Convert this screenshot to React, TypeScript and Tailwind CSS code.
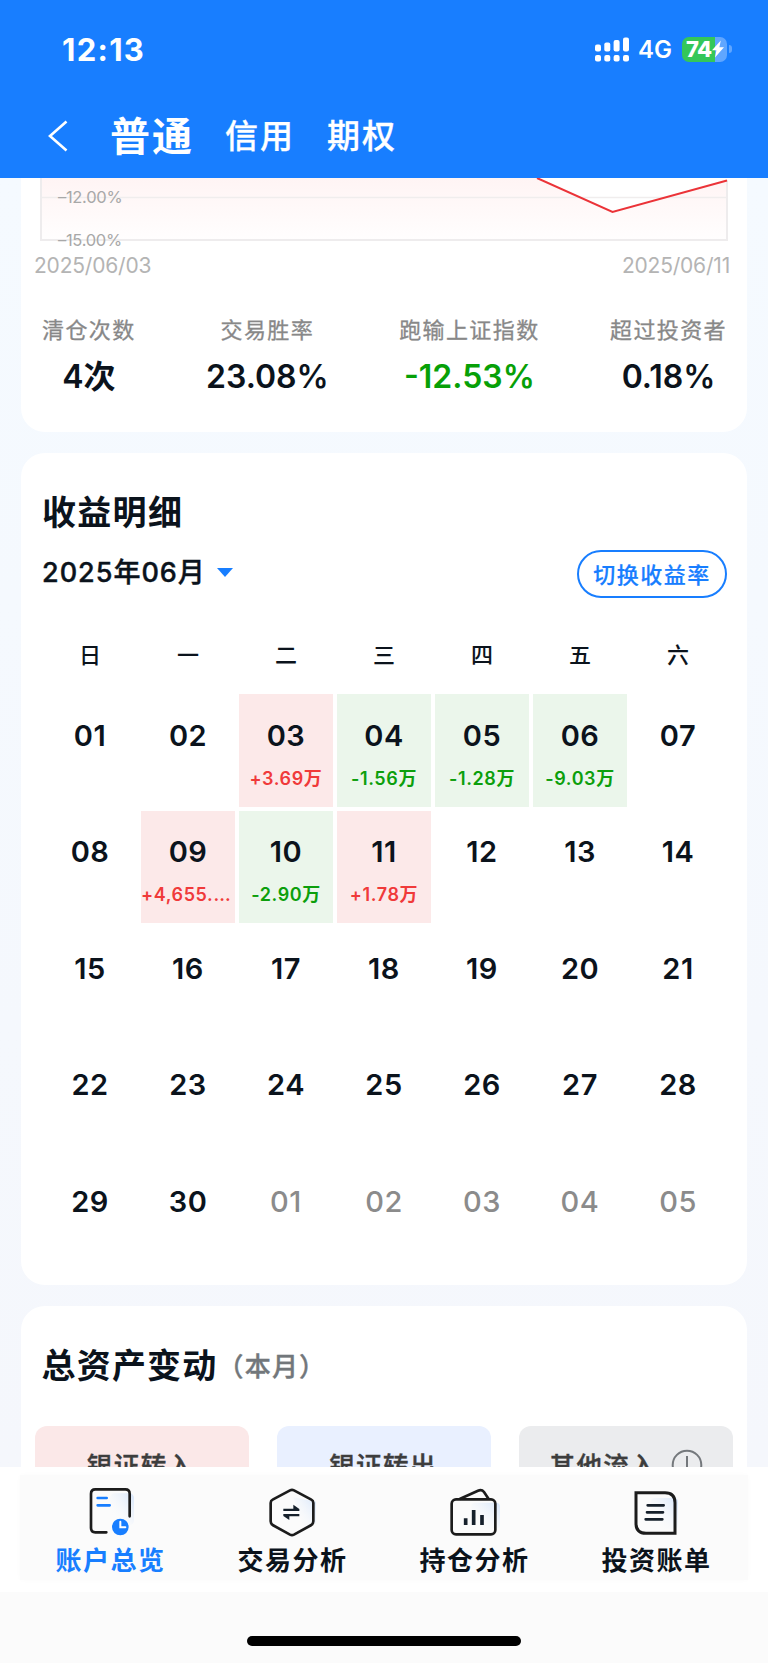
import React from 'react';

interface Stat {
    label: string;
    value: string;
    tone?: string;
}

interface Day {
    day: string;
    amount?: string;
    kind?: 'gain' | 'loss';
    muted?: boolean;
}

const stats: Stat[] = [
    { label: '清仓次数', value: '4次' },
    { label: '交易胜率', value: '23.08%' },
    { label: '跑输上证指数', value: '-12.53%', tone: 'text-[#07a007]' },
    { label: '超过投资者', value: '0.18%' },
];

const weekdays = ['日', '一', '二', '三', '四', '五', '六'];

const results: Record<string, Pick<Day, 'amount' | 'kind'>> = {
    '03': { amount: '+3.69万', kind: 'gain' },
    '04': { amount: '-1.56万', kind: 'loss' },
    '05': { amount: '-1.28万', kind: 'loss' },
    '06': { amount: '-9.03万', kind: 'loss' },
    '09': { amount: '+4,655.…', kind: 'gain' },
    '10': { amount: '-2.90万', kind: 'loss' },
    '11': { amount: '+1.78万', kind: 'gain' },
};

const days: Day[] = Array.from({ length: 35 }, (_, i) => {
    const muted = i >= 30;
    const day = String(muted ? i - 29 : i + 1).padStart(2, '0');
    return muted ? { day, muted } : { day, ...results[day] };
});

const kindStyles = {
    gain: 'bg-[#fce9e9] text-[#f03a3a]',
    loss: 'bg-[#ebf6eb] text-[#0c9f0c]',
};

const StatusBar = () => (
    <div className="flex h-[98px] items-center justify-between pl-[62px] pr-9 text-white">
        <span className="text-[31px] font-bold leading-none tracking-[1.3px]">12:13</span>
        <div className="flex items-center">
            <svg width="34" height="25" viewBox="0 0 34 25" fill="currentColor">
                <rect x="0" y="7.5" width="6" height="7" rx="2" />
                <rect x="9.3" y="5.5" width="6" height="9" rx="2" />
                <rect x="18.6" y="3" width="6" height="11.5" rx="2" />
                <rect x="28" y="0.5" width="6" height="14" rx="2" />
                <rect x="0" y="18" width="6" height="6.5" rx="2" />
                <rect x="9.3" y="18" width="6" height="6.5" rx="2" />
                <rect x="18.6" y="18" width="6" height="6.5" rx="2" />
                <rect x="28" y="18" width="6" height="6.5" rx="2" />
            </svg>
            <span className="ml-[9px] w-[44px] pt-0.5 text-[24px] font-semibold leading-none">4G</span>
            <div className="flex h-[25px] w-[45px] items-center overflow-hidden rounded-[7px] bg-gradient-to-r from-[#34c759] from-73% to-[#60a6ff] to-73% pl-1">
                <span className="text-[22px] font-extrabold leading-none tracking-[-0.6px]">74</span>
                <svg className="shrink-0" width="12" height="18" viewBox="0 0 12 17" fill="currentColor">
                    <path d="M8.8 0 0 9.8h4.4L3 17l9-10.2H7.4z" />
                </svg>
            </div>
            <div className="ml-0.5 h-2 w-[3px] rounded-r-full bg-[#60a6ff]" />
        </div>
    </div>
);

const Header = () => (
    <header className="h-[178px] shrink-0 bg-[#187eff]">
        <StatusBar />
        <div className="flex h-[76px] items-center pl-12 text-white">
            <svg width="20" height="32" viewBox="0 0 20 32" fill="none" stroke="currentColor" strokeWidth="2.6">
                <path d="M18.5 1.5 2 16l16.5 14.5" />
            </svg>
            <span className="ml-[42px] pt-0.5 text-[40px] font-bold leading-none tracking-[2px]">普通</span>
            <span className="ml-[31px] text-[33px] font-medium leading-none tracking-[2px] [-webkit-text-stroke:0.3px]">信用</span>
            <span className="ml-8 text-[33px] font-medium leading-none tracking-[2px] [-webkit-text-stroke:0.3px]">期权</span>
        </div>
    </header>
);

const ReturnChart = () => (
    <svg className="block overflow-visible" width="726" height="64" viewBox="21 178 726 64">
        <defs>
            <linearGradient id="area" x1="0" y1="178" x2="0" y2="240" gradientUnits="userSpaceOnUse">
                <stop offset="0" stopColor="#fff4f4" />
                <stop offset="1" stopColor="#fffefe" />
            </linearGradient>
        </defs>
        <path d="M41 178H537L612.5 212 727 180V240H41Z" fill="url(#area)" />
        <path d="M41 197.5H727" stroke="#f0eded" strokeWidth="1.3" />
        <path d="M41 178V240H727V180" fill="none" stroke="#eeeced" strokeWidth="2" />
        <path d="M537 178 612.5 212 727 180.5" fill="none" stroke="#eb3338" strokeWidth="2" />
        <g fill="#a8a8a8" fontSize="16.5" letterSpacing="-0.3">
            <text x="58" y="203">–12.00%</text>
            <text x="58" y="246">–15.00%</text>
        </g>
    </svg>
);

const SummaryCard = () => (
    <section className="h-[254px] shrink-0 rounded-b-[24px] bg-white">
        <ReturnChart />
        <div className="flex h-[46px] items-center justify-between pl-[13px] pr-[17px] text-[21px] leading-none tracking-[-0.2px] text-[#b4b4b4]">
            <span>2025/06/03</span>
            <span>2025/06/11</span>
        </div>
        <div className="flex justify-between pl-[21px] pr-[20px] pt-7">
            {stats.map((s) => (
                <div key={s.label} className="flex flex-col items-center">
                    <span className="text-[22px] leading-[28px] tracking-[1.4px] text-[#888] [-webkit-text-stroke:0.3px]">{s.label}</span>
                    <span className={`mt-[15px] text-[32px] font-semibold leading-[36px] ${s.tone ?? 'text-[#0b131c]'}`}>{s.value}</span>
                </div>
            ))}
        </div>
    </section>
);

const CalendarCard = () => (
    <section className="h-[832px] shrink-0 rounded-[24px] bg-white pl-[21px] pr-5 pt-10">
        <h2 className="text-[34px] font-bold leading-[40px] tracking-[1.3px]">收益明细</h2>
        <div className="mt-[17px] flex h-12 items-center justify-between">
            <div className="flex items-center pb-1">
                <span className="text-[27px] font-medium leading-none tracking-[1px] [-webkit-text-stroke:0.4px]">2025年06月</span>
                <svg className="ml-[11px]" width="16" height="9" viewBox="0 0 16 9">
                    <path d="M0 0H16L8 9Z" fill="#187eff" />
                </svg>
            </div>
            <button className="h-12 w-[150px] rounded-full border-2 border-[#187eff] pt-0.5 text-[22px] font-medium leading-none tracking-[1.5px] text-[#187eff] [-webkit-text-stroke:0.2px]">
                切换收益率
            </button>
        </div>
        <div className="ml-px mr-0.5 mt-[42px] grid grid-cols-7 gap-x-1 text-center text-[22px] font-medium leading-[30px]">
            {weekdays.map((w) => (
                <span key={w}>{w}</span>
            ))}
        </div>
        <div className="ml-px mr-0.5 mt-6 grid grid-cols-7 gap-1">
            {days.map((d, i) => (
                <div key={i} className={`flex h-[112.6px] min-w-0 flex-col items-center pt-[23.5px] ${d.kind ? kindStyles[d.kind] : ''}`}>
                    <span className={`text-[29px] leading-[36px] tracking-[0.5px] ${d.muted ? 'font-medium text-[#8b8b8b]' : 'font-semibold text-[#0b131c]'}`}>
                        {d.day}
                    </span>
                    {d.amount && (
                        <span className={`mt-[13px] whitespace-nowrap text-[18px] font-semibold leading-[24px] tracking-[0.6px] ${d.amount.endsWith('…') ? 'self-start' : ''}`}>
                            {d.amount}
                        </span>
                    )}
                </div>
            ))}
        </div>
    </section>
);

const AssetCard = () => (
    <section className="h-[240px] shrink-0 rounded-t-[24px] bg-white px-[13.5px] pt-[38px]">
        <h2 className="flex items-center pl-[7px] text-[34px] font-bold leading-[40px] tracking-[1.2px]">
            总资产变动
            <span className="pt-[3px] text-[26px] font-medium tracking-[1.2px] text-[#72777b] [-webkit-text-stroke:0.4px]">（本月）</span>
        </h2>
        <div className="mt-[39px] grid grid-cols-3 gap-7 text-[25.5px] font-medium leading-none tracking-[1.4px] text-[#3d3d3d] [-webkit-text-stroke:0.4px]">
            <div className="flex h-[100px] items-start justify-center rounded-xl bg-[#fbe8e8] pr-0.5 pt-[27px]">银证转入</div>
            <div className="flex h-[100px] items-start justify-center rounded-xl bg-[#e9f0ff] pr-0.5 pt-[27px]">银证转出</div>
            <div className="flex h-[100px] items-start justify-center rounded-xl bg-[#ebecee] pt-[27px]">
                其他流入
                <svg className="-mt-1 ml-3.5" width="32" height="32" viewBox="0 0 32 32" fill="none" stroke="#74787c" strokeWidth="2">
                    <circle cx="16" cy="16" r="14.3" />
                    <path d="M16 7v12M16 22v3" />
                </svg>
            </div>
        </div>
    </section>
);

/* Every tab icon is drawn on a 156 x 162 board */
const OverviewIcon = () => (
    <svg width="52" height="54" viewBox="255 75 156 162" fill="none" strokeLinecap="round">
        <rect x="330" y="100" width="72" height="95" rx="14" fill="url(#tint)" />
        <path d="M319 217H286Q273 217 273 204V101Q273 88 286 88H376Q389 88 389 101V169" stroke="#1c1c1c" strokeWidth="8" />
        <path d="M293 114H320M293 136H329" stroke="#187eff" strokeWidth="8" />
        <circle cx="361" cy="201" r="25" fill="#187eff" />
        <path d="M361 185V202H376" stroke="#fff" strokeWidth="6" />
    </svg>
);

const TradeIcon = () => (
    <svg width="52" height="54" viewBox="801 75 156 162" fill="none">
        <path d="M880 112 948 125V190L912 208Z" fill="url(#tint)" />
        <path d="M870 91Q876 88 882 91L934 119Q940 122 940 129V184Q940 191 934 195L882 224Q876 227 870 224L818 195Q812 191 812 184V129Q812 122 818 119Z" stroke="#1c1c1c" strokeWidth="8" />
        <path d="M850 146H880V134L898 147V153H850ZM898 169H868V180L850 168V162H898Z" fill="#16202b" />
    </svg>
);

const HoldingIcon = () => (
    <svg width="52" height="54" viewBox="195 75 156 162" fill="none">
        <rect x="262" y="128" width="86" height="78" rx="12" fill="url(#tint)" />
        <path d="M227 117 282 92Q293 87 300 96L314 117" stroke="#1c1c1c" strokeWidth="8" />
        <rect x="203" y="118" width="131" height="105" rx="13" stroke="#1c1c1c" strokeWidth="8" />
        <path d="M245 175V195M269 150V195M294 165V195" stroke="#16202b" strokeWidth="11" />
    </svg>
);

const BillIcon = () => (
    <svg width="52" height="54" viewBox="741 75 156 162" fill="none">
        <rect x="800" y="114" width="82" height="92" rx="12" fill="url(#tint)" />
        <path d="M756 98H843Q873 98 873 128V220H786Q756 220 756 190Z" stroke="#1c1c1c" strokeWidth="9" />
        <path d="M791 136H839M789 157H837M785 178H835" stroke="#16202b" strokeWidth="8" strokeLinecap="round" />
    </svg>
);

const tabs = [
    { label: '账户总览', Icon: OverviewIcon, active: true },
    { label: '交易分析', Icon: TradeIcon },
    { label: '持仓分析', Icon: HoldingIcon },
    { label: '投资账单', Icon: BillIcon },
];

const TabBar = () => (
    <nav className="h-[125px] shrink-0 bg-white px-5 pt-2">
        <svg width="0" height="0" className="absolute">
            <linearGradient id="tint" x1="1" y1="0" x2="0.15" y2="0.8">
                <stop offset="0" stopColor="#d5e5fb" />
                <stop offset="1" stopColor="#fbfbfb" stopOpacity="0" />
            </linearGradient>
        </svg>
        <div className="grid h-[105px] grid-cols-4 bg-[#fbfbfb] shadow-[0_0_6px_#fbfbfb]">
            {tabs.map(({ label, Icon, active }) => (
                <div key={label} className="flex flex-col items-center pr-px pt-2.5">
                    <Icon />
                    <span className={`mt-[7px] text-[26px] font-bold leading-[30px] tracking-[1.5px] ${active ? 'text-[#187eff]' : 'text-[#0b131c]'}`}>
                        {label}
                    </span>
                </div>
            ))}
        </div>
    </nav>
);

const App: React.FC = () => {
    return (
        <div className="flex h-[1663px] w-[768px] flex-col overflow-hidden bg-[#fbfbfb] font-['Inter','Noto_Sans_CJK_SC',sans-serif] text-[#0b131c]">
            <Header />
            <main className="flex h-[1289px] shrink-0 flex-col gap-[21px] overflow-hidden bg-gradient-to-b from-[#f5faff] to-[#f5f7fc] px-[21px]">
                <SummaryCard />
                <CalendarCard />
                <AssetCard />
            </main>
            <TabBar />
            <div className="flex flex-1 items-start justify-center pt-11">
                <div className="h-2.5 w-[274px] rounded-full bg-black" />
            </div>
        </div>
    );
};

export default App;
